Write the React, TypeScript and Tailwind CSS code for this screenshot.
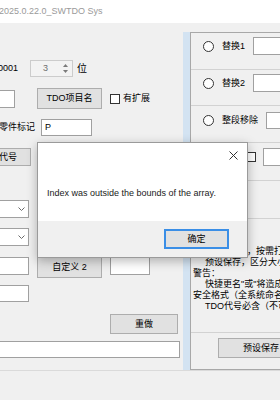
import React from "react";

function Box({ className = "" }: { className?: string }) {
  return <div className={"bg-white border border-[#a0a0a0] shrink-0 " + className} />;
}

function Btn({ className = "", children }: { className?: string; children?: React.ReactNode }) {
  return (
    <div
      className={
        "bg-[#e1e1e1] border border-[#adadad] shrink-0 flex items-center justify-center whitespace-nowrap " +
        className
      }
    >
      {children}
    </div>
  );
}

function Chevron() {
  return (
    <svg width="7" height="4" viewBox="0 0 7 4" className="shrink-0">
      <polyline points="0.5,0.5 3.5,3.5 6.5,0.5" fill="none" stroke="#6a6a6a" strokeWidth="1" />
    </svg>
  );
}

function Select({ className = "" }: { className?: string }) {
  return (
    <div className={"bg-white border border-[#a0a0a0] shrink-0 flex items-center justify-end pr-[3px] " + className}>
      <Chevron />
    </div>
  );
}

function Radio() {
  return <div className="w-[11px] h-[11px] rounded-full border border-[#333333] bg-white shrink-0" />;
}

function Check({ className = "" }: { className?: string }) {
  return <div className={"w-[10px] h-[10px] border border-[#333333] bg-white shrink-0 " + className} />;
}

export default function App() {
  return (
    <div className="w-[280px] h-[400px] overflow-hidden relative bg-[#f0f0f0] text-black text-[9px] leading-[11px] font-['Liberation_Sans','Noto_Sans_CJK_SC',sans-serif]">
      {/* title bar */}
      <div className="h-[23px] bg-white flex items-center text-[9px] text-[#9a9a9a] whitespace-nowrap">
        <span className="-ml-[1px]">2025.0.22.0_SWTDO Sys</span>
      </div>

      {/* body */}
      <div className="flex h-[347px]">
        {/* left column */}
        <div className="w-[183px] shrink-0 flex flex-col overflow-hidden">
          {/* spin row */}
          <div className="mt-[37px] h-[17px] flex items-center">
            <span className="-ml-[2px] w-[32px] shrink-0">0001</span>
            <div className="w-[43px] h-[17px] border border-[#cccccc] bg-[#f3f3f3] flex items-center shrink-0">
              <span className="w-[29px] text-center text-[#6d6d6d]">3</span>
              <div className="flex flex-col items-center gap-[3px] w-[10px]">
                <svg width="5" height="3" viewBox="0 0 5 3">
                  <polygon points="0,3 2.5,0 5,3" fill="#7a7a7a" />
                </svg>
                <svg width="5" height="3" viewBox="0 0 5 3">
                  <polygon points="0,0 2.5,3 5,0" fill="#7a7a7a" />
                </svg>
              </div>
            </div>
            <span className="ml-[4px] text-[10px]">位</span>
          </div>

          {/* TDO row */}
          <div className="mt-[11px] h-[21px] flex items-center">
            <Box className="-ml-[20px] w-[35px] h-[18px]" />
            <Btn className="ml-[22px] w-[65px] h-[21px]">TDO项目名</Btn>
            <Check className="ml-[8px]" />
            <span className="ml-[3px] whitespace-nowrap">有扩展</span>
          </div>

          {/* 零件标记 row */}
          <div className="mt-[10px] h-[17px] flex items-center">
            <span className="-ml-[1px] w-[42px] shrink-0 whitespace-nowrap">零件标记</span>
            <div className="w-[51px] h-[17px] bg-white border border-[#a0a0a0] flex items-center pl-[3px] shrink-0">P</div>
          </div>

          {/* 代号 */}
          <div className="mt-[12px] h-[18px] flex items-center">
            <Btn className="-ml-[15px] w-[46px] h-[18px]">代号</Btn>
          </div>

          {/* selects */}
          <div className="mt-[34px] h-[18px] flex">
            <Select className="-ml-[20px] w-[49px] h-[18px]" />
          </div>
          <div className="mt-[10px] h-[18px] flex">
            <Select className="-ml-[20px] w-[49px] h-[18px]" />
          </div>

          {/* 自定义 row */}
          <div className="mt-[11px] h-[21px] flex items-start">
            <Box className="-ml-[20px] w-[49px] h-[18px]" />
            <Btn className="ml-[8px] w-[65px] h-[21px]">自定义 2</Btn>
            <Box className="ml-[8px] w-[40px] h-[18px]" />
          </div>

          <div className="mt-[7px] h-[17px] flex">
            <Box className="-ml-[20px] w-[49px] h-[17px]" />
          </div>

          <div className="mt-[12px] h-[20px] flex">
            <Btn className="ml-[110px] w-[68px] h-[20px]">重做</Btn>
          </div>

          <div className="mt-[7px] h-[17px] flex">
            <Box className="-ml-[20px] w-[200px] h-[17px]" />
          </div>
        </div>

        {/* blue band */}
        <div className="w-[7px] shrink-0 mt-[9px] bg-[#d3e3f2]" />

        {/* right panel */}
        <div className="w-[100px] shrink-0 mt-[9px] border-l border-t border-b border-[#a8a8a8] flex flex-col">
          <div className="h-[37px] border-b border-[#d2d2d2] pt-[4px]">
            <div className="h-[18px] flex items-center">
              <div className="ml-[12px]"><Radio /></div>
              <span className="ml-[8px] w-[25px] whitespace-nowrap">替换1</span>
              <Box className="ml-[8px] w-[40px] h-[18px]" />
            </div>
          </div>
          <div className="h-[36px] border-b border-[#d2d2d2] pt-[4px]">
            <div className="h-[18px] flex items-center">
              <div className="ml-[12px]"><Radio /></div>
              <span className="ml-[8px] w-[25px] whitespace-nowrap">替换2</span>
              <Box className="ml-[8px] w-[40px] h-[18px]" />
            </div>
          </div>
          <div className="h-[37px] border-b border-[#d2d2d2] pt-[6px]">
            <div className="h-[17px] flex items-center">
              <div className="ml-[12px]"><Radio /></div>
              <span className="ml-[8px] w-[39px] whitespace-nowrap">整段移除</span>
              <Box className="ml-[8px] w-[40px] h-[17px]" />
            </div>
          </div>
          <div className="h-[38px] border-b border-[#d2d2d2] pt-[5px]">
            <div className="h-[18px] flex items-center">
              <div className="ml-[12px]"><Radio /></div>
              <span className="ml-[8px] w-[30px] whitespace-nowrap">前缀1</span>
              <Check className="ml-[1px]" />
              <Box className="ml-[7px] w-[40px] h-[18px]" />
            </div>
          </div>
          <div className="h-[38px] border-b border-[#d2d2d2]" />
          <div className="h-[114px] border-b border-[#d2d2d2] pt-[27px] pl-[2px] text-[9px] leading-[11px] whitespace-nowrap">
            <div>替换选项可选，按需打开</div>
            <div className="pl-[12px]">预设保存，区分大小写</div>
            <div>警告：</div>
            <div className="pl-[12px]">快捷更名"或"将造成覆盖</div>
            <div>安全格式（全系统命名）</div>
            <div className="pl-[12px]">TDO代号必含（不可省略）</div>
          </div>
          <div className="flex-1 pt-[5px]">
            <Btn className="ml-[27px] w-[86px] h-[20px]">预设保存</Btn>
          </div>
        </div>
      </div>
      <div className="h-px bg-[#dadada]" />

      {/* message box */}
      <div className="absolute left-[37px] top-[142px] w-[211px] h-[116px] border border-[#9a9a9a] bg-white flex flex-col shadow-[0_3px_10px_rgba(0,0,0,0.28)]">
        <div className="h-[78px] relative">
          <svg width="9" height="9" viewBox="0 0 9 9" className="absolute left-[191px] top-[8px]">
            <line x1="0.5" y1="0.5" x2="8.5" y2="8.5" stroke="#333" strokeWidth="1" />
            <line x1="8.5" y1="0.5" x2="0.5" y2="8.5" stroke="#333" strokeWidth="1" />
          </svg>
          <div className="pl-[9px] pt-[44px] text-[9px] leading-[12px] text-[#1a1a1a] whitespace-nowrap">
            Index was outside the bounds of the array.
          </div>
        </div>
        <div className="flex-1 bg-[#f0f0f0] flex justify-end pr-[18px] pt-[8px]">
          <div className="w-[65px] h-[20px] bg-[#e1e1e1] border-2 border-[#3a8ee6] flex items-center justify-center">
            确定
          </div>
        </div>
      </div>
    </div>
  );
}
